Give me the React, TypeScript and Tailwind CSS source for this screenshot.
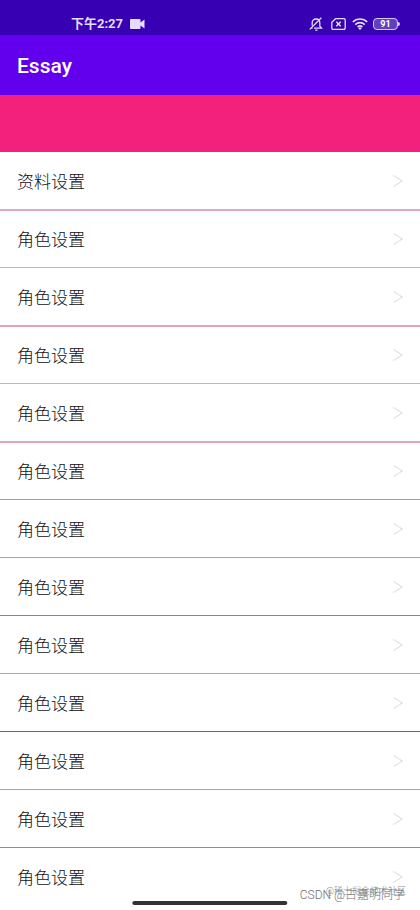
import { clsx } from "clsx";

interface Item {
  title: string;
  line: string;
}

const items: Item[] = [
  { title: "资料设置", line: "border-t border-[#f3217c]" },
  { title: "角色设置", line: "border-t-2 border-[#e2a6c6]" },
  { title: "角色设置", line: "border-t border-[#f29cc0]" },
  { title: "角色设置", line: "border-t-2 border-[#e0a4bf]" },
  { title: "角色设置", line: "border-t border-[#ee9cbe]" },
  { title: "角色设置", line: "border-t-2 border-[#e0a6c0]" },
  { title: "角色设置", line: "border-t border-[#d87cb0]" },
  { title: "角色设置", line: "border-t border-[#e884ac]" },
  { title: "角色设置", line: "border-t border-[#c8609e]" },
  { title: "角色设置", line: "border-t border-[#ea8ab0]" },
  { title: "角色设置", line: "border-t border-[#b43a84]" },
  { title: "角色设置", line: "border-t border-[#e884ac]" },
  { title: "角色设置", line: "border-t border-[#cc68a4]" },
];

const StatusBar = () => {
  return (
    <div className="flex h-[35px] items-end justify-between bg-[#3700b3] pr-5 pb-1 pl-[71px] text-[#e4dcf8]">
      <div className="flex items-center gap-[7px]">
        <span className="text-[13px] leading-[14px] font-bold">下午2:27</span>
        <svg className="h-[10px] w-[15px]" viewBox="0 0 15 10" fill="currentColor">
          <path d="M1 0h8.500a1 1 0 0 1 1 1v2.500L14.500.5v9L10.500 6.500V9a1 1 0 0 1-1 1H1a1 1 0 0 1-1-1V1a1 1 0 0 1 1-1z" />
        </svg>
      </div>

      <div className="flex items-center">
        <svg className="mr-2 h-[14px] w-[14px]" viewBox="0 0 14 14" fill="none" stroke="currentColor" strokeWidth="1.300">
          <path d="M3.200 8.500V5.800C3.200 3.500 4.800 2 7 2s3.800 1.500 3.800 3.800v3.400l1.700 2H5M2.500 11.200h1M6.200 13.200h2.300M.8 12.400L12.300.8" />
        </svg>
        <svg className="mr-[6px] h-3 w-[15px]" viewBox="0 0 15 12" fill="none" stroke="currentColor" strokeWidth="1.300">
          <path d="M4.500.700H13a1.200 1.200 0 0 1 1.200 1.200v8.200a1.200 1.200 0 0 1-1.200 1.200H2A1.200 1.200 0 0 1 .8 10.100V4.300z" />
          <path d="M5.300 3.800l4.400 4.400M9.700 3.800L5.300 8.200" strokeWidth="1.500" />
        </svg>
        <svg className="mr-[5px] h-3 w-4" viewBox="0 0 16 12" fill="none" stroke="currentColor" strokeWidth="1.600">
          <path d="M.8 4a10.300 10.300 0 0 1 14.400 0M3.200 6.600a6.900 6.900 0 0 1 9.600 0M5.500 9a3.700 3.700 0 0 1 5 0" />
          <path d="M6.200 10.200a2.600 2.600 0 0 1 3.600 0L8 12z" fill="currentColor" stroke="none" />
        </svg>
        <div className="flex h-3 w-[25px] items-center justify-center rounded-sm border border-[#d5c8f2] bg-[#6040bc] text-[9px] leading-[9px] font-bold text-white">
          91
        </div>
        <div className="h-1 w-[2px] rounded-r-sm bg-[#d5c8f2]" />
      </div>
    </div>
  );
};

const SettingRow = ({ title, line }: Item) => {
  return (
    <li>
      <button
        type="button"
        className={clsx(
          "flex h-[58px] w-full cursor-pointer items-center justify-between pr-[17px] pl-[17px] text-left",
          line
        )}
      >
        <span className="font-['Noto_Sans_CJK_SC',sans-serif] text-[17px] leading-6 font-light text-[#111]">
          {title}
        </span>
        <svg className="h-3 w-[10px]" viewBox="0 0 10 12" fill="none" stroke="#d8d8d8" strokeWidth="1">
          <path d="M.5.5L9.300 6 .5 11.500" />
        </svg>
      </button>
    </li>
  );
};

const App = () => {
  return (
    <div className="relative h-screen overflow-hidden bg-white font-[Roboto,'Noto_Sans_CJK_SC',sans-serif]">
      <StatusBar />
      <header className="flex h-[60px] items-center bg-[#6200ee] px-[17px] pt-1">
        <h1 className="text-[21px] font-medium text-white">Essay</h1>
      </header>
      <div className="h-14 bg-[#f3217c]" />

      <ul>
        {items.map((item, index) => (
          <SettingRow key={index} title={item.title} line={item.line} />
        ))}
      </ul>

      <span className="absolute right-[14px] bottom-[13px] text-[9px] leading-3 font-light text-[#8c8c8c]">
        @稀土掘金技术社区
      </span>
      <span className="absolute right-[15px] bottom-2 text-xs leading-[14px] font-light text-[#707070]">
        CSDN @古嘉明同学
      </span>
      <div className="absolute bottom-[5px] left-1/2 h-1 w-[37%] -translate-x-1/2 rounded-full bg-[#333]" />
    </div>
  );
};

export default App;
